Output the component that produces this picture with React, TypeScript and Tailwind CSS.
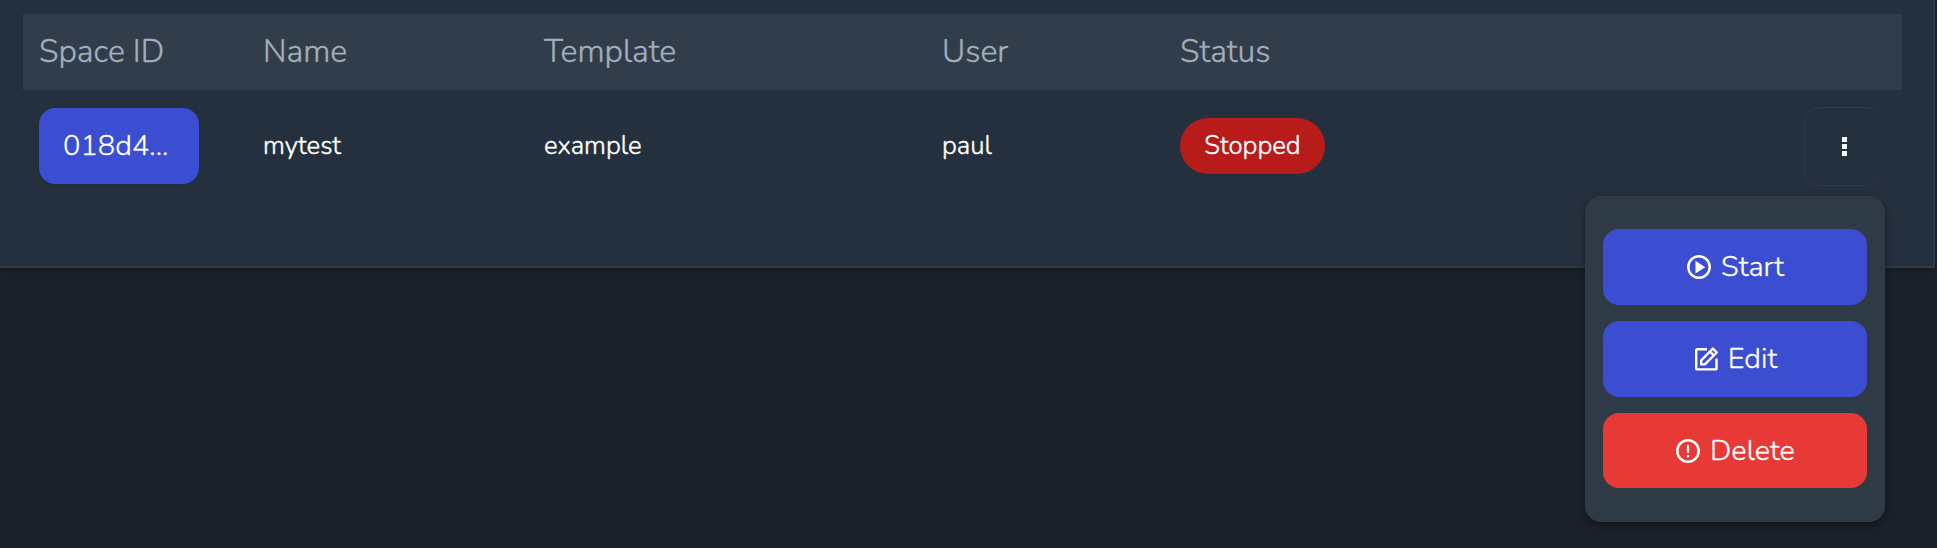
import React from "react";

function PlayIcon() {
  return (
    <svg className="mt-px size-6 shrink-0" viewBox="0 0 24 24" fill="none">
      <circle cx="12" cy="12" r="10.7" stroke="currentColor" strokeWidth="2.5" />
      <path d="M8.5 5.8v12.8L18.2 12.2z" fill="currentColor" />
    </svg>
  );
}

function EditIcon() {
  return (
    <svg className="mt-px size-6 shrink-0" viewBox="0 0 24 24" fill="none" stroke="currentColor" strokeWidth="2.4" strokeLinejoin="round">
      <path d="M13 2.3H3.2a1 1 0 0 0-1 1v18.1a1 1 0 0 0 1 1h18.3a1 1 0 0 0 1-1v-10" />
      <path d="M7.2 17.4v-4.1L18.9 1.6l3.9 3.9-11.9 11.9zM16 4.7l3.6 3.6" />
    </svg>
  );
}

function AlertIcon() {
  return (
    <svg className="mt-0.5 size-6 shrink-0" viewBox="0 0 24 24" fill="none" stroke="currentColor">
      <circle cx="12" cy="12" r="10.7" strokeWidth="2.5" />
      <path d="M12 5.8v8M12 16v2.3" strokeWidth="2.3" />
    </svg>
  );
}

const th =
  "text-left font-light align-middle text-[32px] leading-none text-[#a2afbd] [-webkit-text-stroke:0.35px_currentColor]";
const td =
  "align-middle text-[25.8px] font-light leading-none text-white [-webkit-text-stroke:0.4px_currentColor]";
const action =
  "flex w-full items-center justify-center rounded-2xl pl-px text-[29px] font-light leading-none text-white [-webkit-text-stroke:0.3px_currentColor]";

export default function App() {
  return (
    <div className="h-[548px] w-full overflow-hidden bg-[#1b212b] font-['Nunito','Lato',sans-serif]">
      <div className="h-[268px] w-[1935px] border-r-2 border-b-2 border-[#2f3b49] bg-[#25303f] pt-3.5 pl-[23px] shadow-md">
        <table className="w-[1879px] table-fixed border-collapse">
          <colgroup>
            <col className="w-[240px]" />
            <col className="w-[281px]" />
            <col className="w-[398px]" />
            <col className="w-[238px]" />
            <col />
            <col className="w-[240px]" />
          </colgroup>
          <thead>
            <tr className="h-[76px] bg-[#323d4b]">
              <th className={`${th} pl-4`}>Space ID</th>
              <th className={th}>Name</th>
              <th className={th}>Template</th>
              <th className={th}>User</th>
              <th className={th}>Status</th>
              <th />
            </tr>
          </thead>
          <tbody>
            <tr className="h-28">
              <td className="pl-4 align-middle">
                <button className="flex h-[76px] w-40 items-center rounded-2xl bg-[#3b4dd0] pb-0.5 pl-6 text-[29px] font-light leading-none text-white shadow-sm [-webkit-text-stroke:0.3px_currentColor]">
                  <span>018d4...</span>
                </button>
              </td>
              <td className={td}><span>mytest</span></td>
              <td className={td}><span>example</span></td>
              <td className={td}><span>paul</span></td>
              <td className={td}>
                <span className="flex h-14 w-[145px] items-center justify-center rounded-full bg-[#b71c1b] text-white">
                  <span>Stopped</span>
                </span>
              </td>
              <td className="align-middle">
                <div className="relative ml-auto mr-[19px] w-[79px]">
                  <button aria-label="Actions" className="flex h-[79px] w-[79px] flex-col items-center justify-center gap-0.5 rounded-2xl border border-r-0 border-[#2f3a48]">
                    <i className="size-[5px] bg-white" />
                    <i className="size-[5px] bg-white" />
                    <i className="size-[5px] bg-white" />
                  </button>
                  <div className="absolute top-[89px] -right-0.5 flex h-[326px] w-[300px] flex-col gap-4 rounded-2xl bg-[#2e3a46] px-[18px] py-[33px] shadow-[0_3px_10px_rgba(0,0,0,0.4)]">
                    <button className={`${action} h-[76px] gap-2.5 bg-[#3b4dd0]`}>
                      <PlayIcon />
                      <span>Start</span>
                    </button>
                    <button className={`${action} h-[76px] gap-2.5 bg-[#3b4dd0]`}>
                      <EditIcon />
                      <span>Edit</span>
                    </button>
                    <button className={`${action} h-[75px] gap-2.5 bg-[#e73936]`}>
                      <AlertIcon />
                      <span>Delete</span>
                    </button>
                  </div>
                </div>
              </td>
            </tr>
          </tbody>
        </table>
      </div>
    </div>
  );
}
